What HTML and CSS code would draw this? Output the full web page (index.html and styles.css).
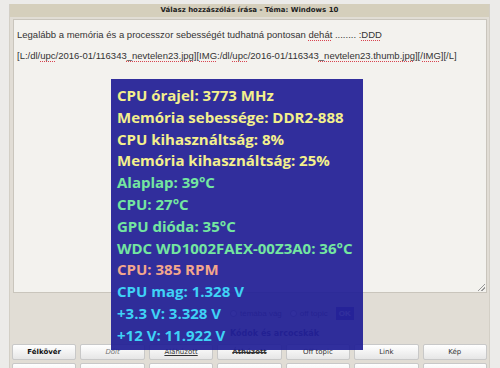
FILE: index.html
```html
<!DOCTYPE html>
<html lang="hu">
<head>
    <meta charset="UTF-8">
    <title>Válasz hozzászólás írása</title>
    <link rel="stylesheet" href="styles.css">
</head>
<body>

    <div class="panel">
        <div class="panel-head">Válasz hozzászólás írása - Téma: Windows 10</div>

        <div class="editor">
            <p>Legalább a memória és a processzor sebességét tudhatná pontosan <span class="sp">dehát</span> ........ :<span class="sp">DDD</span></p>
            <p>[L:/dl/<span class="sp">upc</span>/2016-01/116343<span class="sp">_nevtelen23.jpg</span>][<span class="sp">IMG</span>:/dl/<span class="sp">upc</span>/2016-01/116343<span class="sp">_nevtelen23.thumb.jpg</span>][/<span class="sp">IMG</span>][/L]</p>
            <span class="grip"></span>
        </div>

        <div class="options">
            <span class="opt"><i class="radio"></i> témába vág</span>
            <span class="opt"><i class="radio"></i> off topic</span>
            <span class="ok">OK</span>
        </div>
        <div class="codes-title">Kódok és arcocskák</div>

        <div class="buttons">
            <button class="b">Félkövér</button>
            <button class="i">Dőlt</button>
            <button class="u">Aláhúzott</button>
            <button class="s">Áthúzott</button>
            <button>Off topic</button>
            <button>Link</button>
            <button>Kép</button>
        </div>
        <div class="buttons">
            <button></button>
            <button></button>
            <button></button>
            <button></button>
            <button></button>
            <button></button>
            <button></button>
        </div>
    </div>

    <!-- rendszerinfó overlay -->
    <div class="sysinfo">
        <div class="yellow">CPU órajel: 3773 MHz</div>
        <div class="yellow">Memória sebessége: DDR2-888</div>
        <div class="yellow">CPU kihasználtság: 8%</div>
        <div class="yellow">Memória kihasználtság: 25%</div>
        <div class="green">Alaplap: 39°C</div>
        <div class="green">CPU: 27°C</div>
        <div class="green">GPU dióda: 35°C</div>
        <div class="green">WDC WD1002FAEX-00Z3A0: 36°C</div>
        <div class="salmon">CPU: 385 RPM</div>
        <div class="cyan">CPU mag: 1.328 V</div>
        <div class="cyan">+3.3 V: 3.328 V</div>
        <div class="cyan">+12 V: 11.922 V</div>
    </div>

</body>
</html>
```

FILE: styles.css
```css
* {
    margin: 0;
    padding: 0;
    box-sizing: border-box;
}

body {
    background-color: #ecebe9;
    font-family: 'Liberation Sans', Arial, sans-serif;
    padding: 4px 10px 0 9px;
    height: 368px;
    overflow: hidden;
}

.panel {
    background-color: #e1ddd5;
    border: 1px solid #d3cfc6;
    border-top: none;
    padding-bottom: 4px;
}

.panel-head {
    height: 13px;
    line-height: 13px;
    background-color: #d5cfbc;
    text-align: center;
    font-family: 'DejaVu Sans', Verdana, sans-serif;
    font-weight: bold;
    font-size: 7px;
    color: #222;
}

.editor {
    position: relative;
    margin: 2px 2px 0 3px;
    height: 274px;
    background-color: #f3f2ee;
    border: 1px solid #c9c5bc;
    padding: 9px 3px 5px;
    font-size: 9.5px;
    color: #333;
}

.editor p {
    line-height: 11px;
    margin-bottom: 10px;
}

.sp {
    text-decoration: underline dotted #d9434f;
    text-underline-offset: 2px;
}

.grip {
    position: absolute;
    right: 1px;
    bottom: 1px;
    width: 7px;
    height: 7px;
    background: linear-gradient(135deg, transparent 45%, #999 46%, #999 54%, transparent 55%, transparent 70%, #999 71%, #999 79%, transparent 80%);
}

.options {
    display: flex;
    align-items: center;
    gap: 8px;
    padding: 14px 0 0 220px;
    font-size: 8px;
    color: #555;
}

.opt {
    display: flex;
    align-items: center;
    gap: 3px;
}

.radio {
    display: inline-block;
    width: 7px;
    height: 7px;
    border: 1px solid #999;
    border-radius: 50%;
    background-color: #fff;
}

.ok {
    background-color: #5b4fb0;
    color: #fff;
    font-weight: bold;
    padding: 2px 3px;
}

.codes-title {
    padding: 9px 0 0 220px;
    font-family: 'DejaVu Sans', Verdana, sans-serif;
    font-size: 8px;
    font-weight: bold;
    color: #2a2a60;
    height: 24px;
}

.buttons {
    display: grid;
    grid-template-columns: repeat(7, 1fr);
    gap: 4px;
    padding: 0 2px 0 2px;
    margin-bottom: 3px;
}

.buttons button {
    height: 16px;
    font-family: 'DejaVu Sans', Verdana, sans-serif;
    font-size: 7px;
    color: #333;
    background: linear-gradient(#ffffff, #e6e6e6);
    border: 1px solid #c8c8c8;
    border-radius: 2px;
}

.buttons .b {
    font-weight: bold;
    color: #111;
}

.buttons .i {
    font-style: italic;
    color: #777;
}

.buttons .u {
    text-decoration: underline;
}

.buttons .s {
    text-decoration: line-through;
    font-weight: bold;
}

.sysinfo {
    position: absolute;
    left: 111px;
    top: 79px;
    width: 252px;
    height: 271px;
    background-color: rgba(33, 31, 150, 0.93);
    padding: 6px 6px;
    font-family: 'Open Sans', 'Noto Sans', sans-serif;
    font-weight: bold;
    font-size: 15px;
    line-height: 21.8px;
}

.yellow {
    color: #f4f08c;
}

.green {
    color: #74e6a0;
}

.salmon {
    color: #f3a78c;
}

.cyan {
    color: #3fd2f6;
}
```
